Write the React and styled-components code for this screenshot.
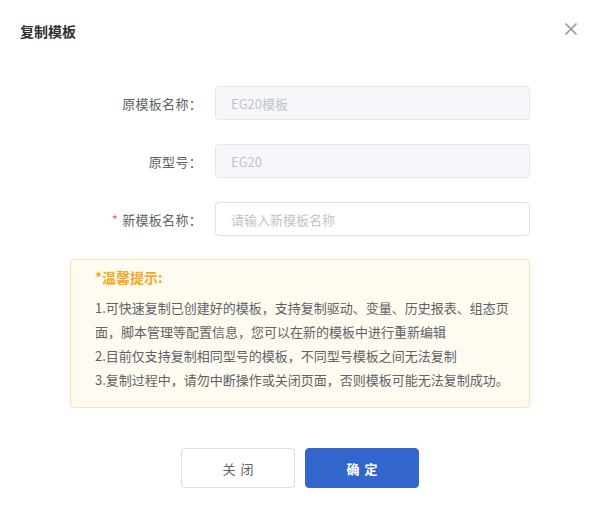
import styled, { createGlobalStyle } from "styled-components";

const Global = createGlobalStyle`
  body {
    margin: 0;
    background: #fff;
    font-family: "Noto Sans CJK SC", "Noto Sans", sans-serif;
  }
`;

const Dialog = styled.div`
  width: 600px;
  height: 507px;
  background: #fff;
  box-sizing: border-box;
  display: flex;
  flex-direction: column;
`;

const Header = styled.div`
  height: 64px;
  padding: 0 20px;
  display: flex;
  align-items: center;
  justify-content: space-between;
  box-sizing: border-box;
`;

const Title = styled.div`
  font-size: 14px;
  font-weight: 700;
  color: #303133;
  margin-top: -2px;
`;

const Close = styled.div`
  width: 14px;
  height: 14px;
  margin-right: 2px;
  margin-top: -6px;
  display: flex;
  cursor: pointer;
`;

const Body = styled.div`
  padding: 22px 70px 0;
  display: flex;
  flex-direction: column;
  gap: 24px;
`;

const Row = styled.div`
  display: flex;
  align-items: center;
  height: 34px;
`;

const Label = styled.div`
  width: 145px;
  padding-right: 13px;
  box-sizing: border-box;
  text-align: right;
  font-size: 13px;
  letter-spacing: 0.3px;
  color: #606266;
`;

const Star = styled.span`
  color: #f56c6c;
  margin-right: 4px;
`;

const Input = styled.input`
  flex: 1;
  height: 34px;
  box-sizing: border-box;
  border: 1px solid #dcdfe6;
  border-radius: 4px;
  padding: 0 15px;
  font-size: 13px;
  font-family: inherit;
  color: #606266;
  background: ${({ disabled }) => (disabled ? "#f5f7fa" : "#fff")};
  border-color: ${({ disabled }) => (disabled ? "#e4e7ed" : "#dcdfe6")};
  outline: none;

  &:disabled {
    color: #c0c4cc;
  }

  &::placeholder {
    color: #c0c4cc;
  }
`;

const Tips = styled.div`
  margin-top: -1px;
  background: #fffbf1;
  border: 1px solid #f8e3b2;
  border-radius: 4px;
  padding: 7px 18px 11px 24px;
  box-sizing: border-box;
  height: 149px;
`;

const TipsTitle = styled.div`
  font-size: 14px;
  font-weight: 700;
  color: #f5a623;
  line-height: 20px;
  margin-bottom: 9px;
`;

const TipsText = styled.div`
  font-size: 13px;
  line-height: 24px;
  color: #606266;
`;

const Footer = styled.div`
  display: flex;
  justify-content: center;
  gap: 10px;
  margin-top: 40px;
`;

const Button = styled.button`
  width: 114px;
  height: 40px;
  border-radius: 4px;
  font-family: inherit;
  font-size: 13px;
  letter-spacing: 5px;
  text-indent: 5px;
  cursor: pointer;
  border: 1px solid ${({ $primary }) => ($primary ? "#3366cc" : "#dcdfe6")};
  background: ${({ $primary }) => ($primary ? "#3366cc" : "#fff")};
  color: ${({ $primary }) => ($primary ? "#fff" : "#606266")};
  font-weight: ${({ $primary }) => ($primary ? 700 : 400)};
`;

export default function App() {
  return (
    <Dialog>
      <Global />
      <Header>
        <Title>复制模板</Title>
        <Close>
          <svg width="14" height="14" viewBox="0 0 14 14">
            <path d="M1.5 1.5 L12.5 12.5 M12.5 1.5 L1.5 12.5" stroke="#909399" strokeWidth="1.6" />
          </svg>
        </Close>
      </Header>
      <Body>
        <Row>
          <Label>原模板名称：</Label>
          <Input disabled value="EG20模板" readOnly />
        </Row>
        <Row>
          <Label>原型号：</Label>
          <Input disabled value="EG20" readOnly />
        </Row>
        <Row>
          <Label>
            <Star>*</Star>新模板名称：
          </Label>
          <Input placeholder="请输入新模板名称" />
        </Row>
        <Tips>
          <TipsTitle>*温馨提示:</TipsTitle>
          <TipsText>
            1.可快速复制已创建好的模板，支持复制驱动、变量、历史报表、组态页面，脚本管理等配置信息，您可以在新的模板中进行重新编辑
          </TipsText>
          <TipsText>2.目前仅支持复制相同型号的模板，不同型号模板之间无法复制</TipsText>
          <TipsText>3.复制过程中，请勿中断操作或关闭页面，否则模板可能无法复制成功。</TipsText>
        </Tips>
      </Body>
      <Footer>
        <Button>关闭</Button>
        <Button $primary>确定</Button>
      </Footer>
    </Dialog>
  );
}
